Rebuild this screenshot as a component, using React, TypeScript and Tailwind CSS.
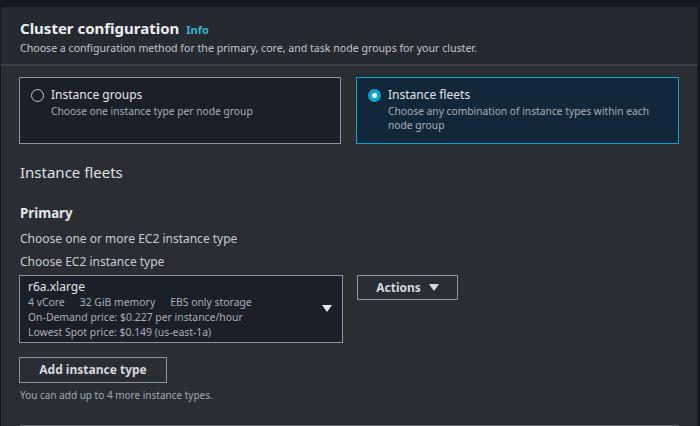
import React from "react";

export default function App() {
  const font = { fontFamily: '"Noto Sans", "Open Sans", sans-serif' };
  return (
    <div className="w-[700px] h-[426px] overflow-hidden bg-[#16191f] pt-[7px] pl-[1px] pr-[2px]" style={font}>
      <div className="h-full bg-[#2a2d32] border-r border-[#1b1e23]">
        <div className="bg-[#252930] border-b-2 border-[#3a3f46] px-[19px] pt-[10px] pb-[8px]">
          <div className="flex items-baseline gap-[7px]">
            <span className="text-[15px] font-bold text-[#eceef0] leading-[22px]">Cluster configuration</span>
            <span className="text-[11px] font-bold text-[#3bb3d8]">Info</span>
          </div>
          <div className="text-[10.6px] text-[#c3c8cd] leading-[16px] mt-[1px]">
            Choose a configuration method for the primary, core, and task node groups for your cluster.
          </div>
        </div>
        <div className="px-[18px] pt-[11px]">
          <div className="flex gap-[15px]">
            <div className="w-[323px] h-[67px] bg-[#1b1f27] border border-[#8d949c] px-[11px] pt-[9px] flex gap-[7px]">
              <div className="w-[13px] h-[13px] mt-[2px] rounded-full border-[1.5px] border-[#c8ccd1] shrink-0" />
              <div>
                <div className="text-[12px] text-[#e3e6e9] leading-[16px]">Instance groups</div>
                <div className="text-[10.25px] text-[#a9b0b7] leading-[14px] mt-[1px]">Choose one instance type per node group</div>
              </div>
            </div>
            <div className="w-[323px] h-[67px] bg-[#13273a] border border-[#0aa4d2] px-[11px] pt-[9px] flex gap-[7px]">
              <div className="w-[13px] h-[13px] mt-[2px] rounded-full bg-[#0aa4d2] shrink-0 flex items-center justify-center">
                <div className="w-[5px] h-[5px] rounded-full bg-white" />
              </div>
              <div>
                <div className="text-[12px] text-[#e3e6e9] leading-[16px]">Instance fleets</div>
                <div className="text-[10.25px] text-[#a9b0b7] leading-[14px] mt-[1px] w-[280px]">Choose any combination of instance types within each node group</div>
              </div>
            </div>
          </div>
          <div className="text-[15px] text-[#dfe2e5] leading-[22px] mt-[17px] pl-[1px]">Instance fleets</div>
          <div className="text-[13.3px] font-bold text-[#e3e6e9] leading-[20px] mt-[20px] pl-[1px]">Primary</div>
          <div className="text-[12px] text-[#c8ccd1] leading-[16px] mt-[8px] pl-[1px]">Choose one or more EC2 instance type</div>
          <div className="text-[12px] text-[#c8ccd1] leading-[16px] mt-[7px] pl-[1px]">Choose EC2 instance type</div>
          <div className="flex gap-[14px] mt-[5px]">
            <div className="w-[324px] h-[68px] bg-[#1b1f27] border border-[#8d949c] px-[8px] pt-[3px] relative">
              <div className="text-[12px] text-[#e3e6e9] leading-[16px]">r6a.xlarge</div>
              <div className="text-[10.4px] text-[#a9b0b7] leading-[15px] flex">
                <span>4 vCore</span>
                <span className="ml-[15px]">32 GiB memory</span>
                <span className="ml-[15px]">EBS only storage</span>
              </div>
              <div className="text-[10.4px] text-[#a9b0b7] leading-[15px]">On-Demand price: $0.227 per instance/hour</div>
              <div className="text-[10.4px] text-[#a9b0b7] leading-[14px]">Lowest Spot price: $0.149 (us-east-1a)</div>
              <svg className="absolute right-[10px] top-[29px]" width="10" height="8" viewBox="0 0 10 8">
                <path d="M0 0 L10 0 L5 7 Z" fill="#e3e6e9" />
              </svg>
            </div>
            <div className="h-[25px] w-[101px] border border-[#8d949c] flex items-center justify-center gap-[8px]">
              <span className="text-[12px] font-bold text-[#d5d9dd]">Actions</span>
              <svg width="10" height="8" viewBox="0 0 10 8">
                <path d="M0 0 L10 0 L5 7 Z" fill="#d5d9dd" />
              </svg>
            </div>
          </div>
          <div className="mt-[14px] h-[26px] w-[148px] border border-[#8d949c] flex items-center justify-center">
            <span className="text-[12px] font-bold text-[#d5d9dd]">Add instance type</span>
          </div>
          <div className="text-[10px] text-[#a3aab1] leading-[14px] mt-[5px] pl-[1px]">You can add up to 4 more instance types.</div>
          <div className="mt-[23px] h-[1px] bg-[#5f666e] ml-[1px]" />
        </div>
      </div>
    </div>
  );
}
